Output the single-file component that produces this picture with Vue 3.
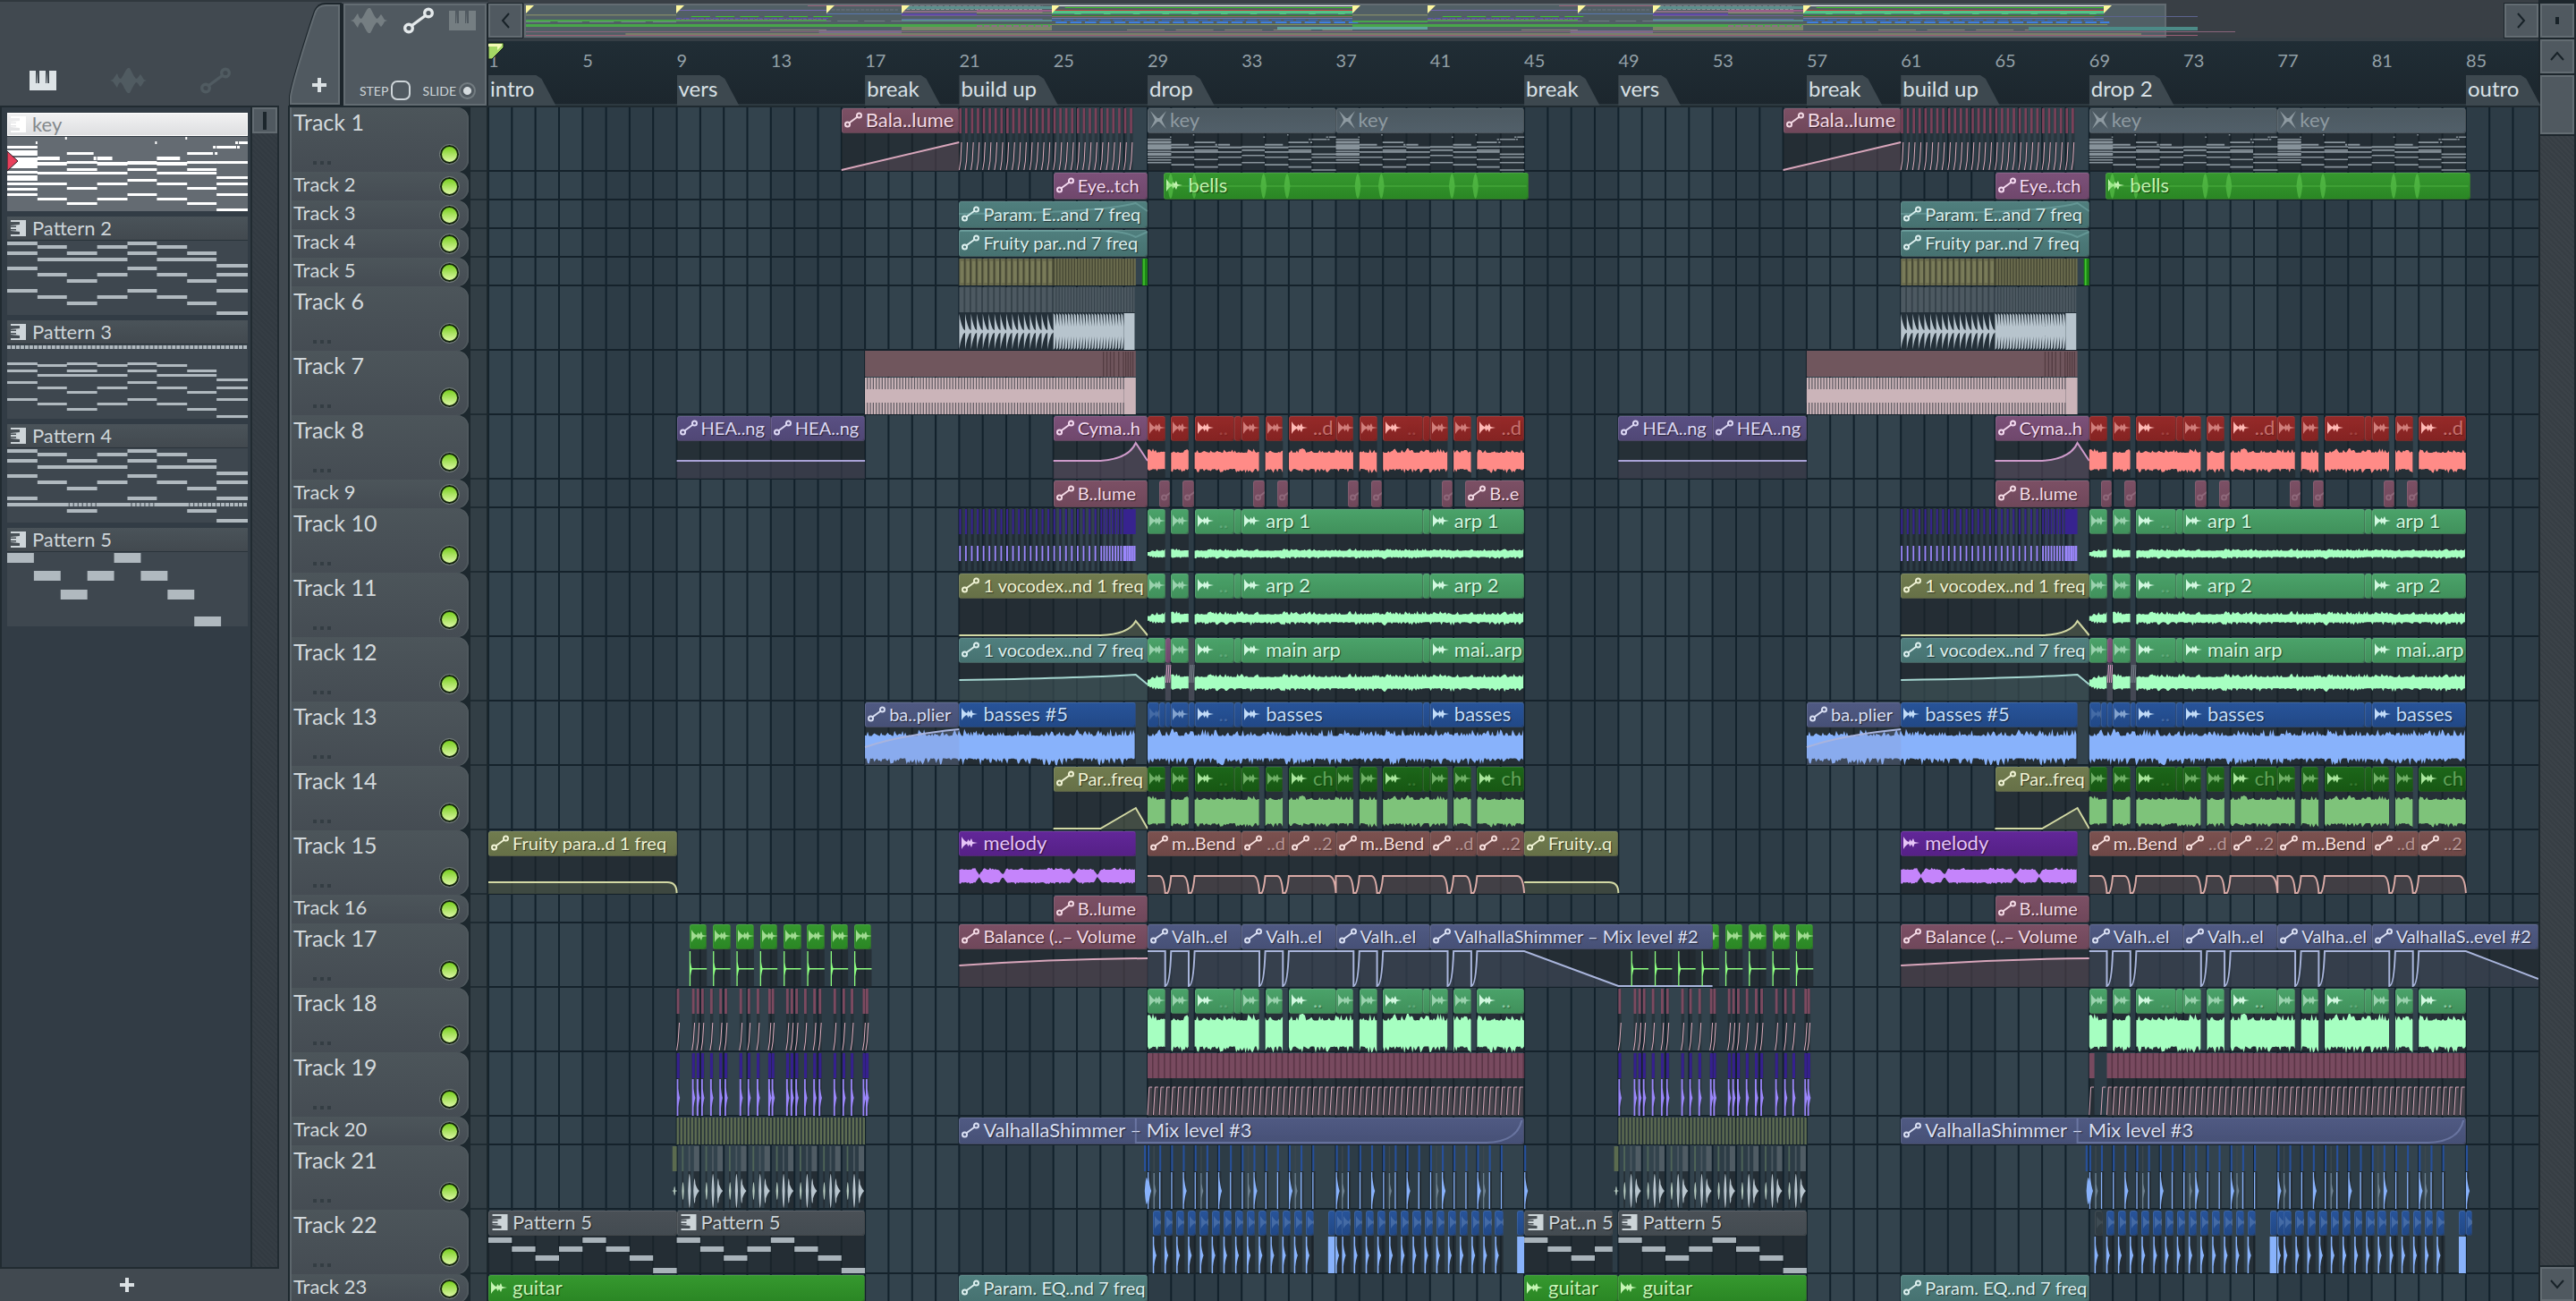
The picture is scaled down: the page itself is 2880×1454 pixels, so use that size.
<script setup>
const TOTAL = 87.08
const BAR = 26.32
const W = Math.round(TOTAL * BAR)
const X = (b) => Math.round((b - 1) * BAR * 10) / 10
const pct = (b) => ((b - 1) / TOTAL) * 100 + '%'
const span = (n) => (n / TOTAL) * 100 + '%'

/* ---------- drawing helpers: every helper returns path data ---------- */
const box = (a, b, y, h) => `M${X(a)} ${y}H${X(b)}V${y + h}H${X(a)}z`
const ticks = (starts, w, y, h) => starts.map((s) => box(s, s + w, y, h)).join('')
const range = (a, b, step) => {
  const out = []
  for (let i = 0; a + i * step < b - 0.001; i++) out.push(a + i * step)
  return out
}
function wave(a, b, c, amp, jitter, seed = 1, env = () => 1) {
  let s = seed * 7919
  const rnd = () => {
    s = (s * 1103515245 + 12345) % 2147483648
    return s / 2147483648
  }
  const up = []
  const down = []
  for (let x = X(a); x <= X(b); x += 1.5) {
    const e = env(x / BAR + 1)
    const r1 = rnd()
    const r2 = rnd()
    up.push(`${x.toFixed(1)} ${(c - e * (amp + (r1 * r1 * r1 * 1.6 - 0.3) * jitter)).toFixed(1)}`)
    down.unshift(`${x.toFixed(1)} ${(c + e * (amp + (r2 * r2 * r2 * 1.6 - 0.3) * jitter)).toFixed(1)}`)
  }
  return `M${up.join('L')}L${down.join('L')}z`
}
const decay = (a, w, c, amp) =>
  `M${X(a)} ${c - amp}Q${X(a + w * 0.35)} ${c - amp * 0.3} ${X(a + w)} ${c}Q${X(a + w * 0.35)} ${c + amp * 0.3} ${X(a)} ${c + amp}z`
const lens = (a, w, c, amp) =>
  `M${X(a)} ${c}Q${X(a + w / 2)} ${c - amp * 2} ${X(a + w)} ${c}Q${X(a + w / 2)} ${c + amp * 2} ${X(a)} ${c}z`

const DARK = 'rgba(31,37,42,.62)'
const fill = (d, f) => ({ d, f, s: 'none' })
const line = (d, s, w = 2) => ({ d, f: 'none', s, w })
const shade = (...pairs) => fill(pairs.map(([a, b]) => box(a, b, 29, 42)).join(''), DARK)
function curve(d, a, b, color, tint) {
  return [shade([a, b]), fill(`${d}L${X(b)} 71L${X(a)} 71z`, tint), line(d, color)]
}
const both = (fn) => [...fn(0), ...fn(40)]

/* ---------- shared segment layouts ---------- */
const chopped = [
  [29, 29.75], [30, 30.75], [31, 32.7], [32.7, 33], [33, 33.75], [34, 34.75], [35, 37],
  [37, 37.75], [38, 38.75], [39, 40.7], [40.7, 41], [41, 41.75], [42, 42.75], [43, 45],
]
const choppedBodies = [
  [29, 29.75], [30, 30.75], [31, 33.75], [34, 34.75], [35, 37.75], [38, 38.75], [39, 41.75], [42, 42.75], [43, 45],
]
const gaps = [29.75, 30.75, 33.75, 34.75, 37.75, 38.75, 41.75, 42.75]
const clip = (a, b, k, i, t = '', o = {}) => ({
  a, b, k, i, t,
  tight: i === 'auto' && t.length * 10 > (b - a) * BAR - 36,
  ...o,
})
const chopClips = (k, t, dots) => (o) =>
  chopped.map(([a, b]) => {
    const len = b - a
    if (len < 0.5) return clip(a + o, b + o, k, '')
    if (len < 1) return clip(a + o, b + o, k, 'audio', '', { dim: true })
    if (len < 1.9) return clip(a + o, b + o, k, 'audio', '..', { ghost: true })
    return clip(a + o, b + o, k, 'audio', t, { faint: true, end: !dots })
  })
const chopWave = (amp, jit, color) => (o) => [
  shade(...choppedBodies.map(([a, b]) => [a + o, b + o])),
  ...choppedBodies.map(([a, b], i) => fill(wave(a + o, b + o, 51, amp, jit, i + 3), color)),
]
const longClips = (k, t1, t2) => (o) => [
  clip(29 + o, 29.75 + o, k, 'audio', '', { dim: true }),
  clip(30 + o, 30.75 + o, k, 'audio', '', { dim: true }),
  clip(31 + o, 32.7 + o, k, 'audio', '..', { ghost: true }),
  clip(32.7 + o, 33 + o, k, ''),
  clip(33 + o, 40.7 + o, k, 'audio', t1),
  clip(40.7 + o, 41 + o, k, ''),
  clip(41 + o, 45 + o, k, 'audio', t2),
]
const longWave = (amp, jit) => (o) => [
  shade([29 + o, 29.75 + o], [30 + o, 30.75 + o], [31 + o, 45 + o]),
  ...[[29, 29.75], [30, 30.75], [31, 45]].map(([a, b], i) =>
    fill(wave(a + o, b + o, 51, amp, jit, i + 2, (x) => (x < 29.5 + o ? 0.5 + (x - 29 - o) : 1)), '#a6ffc1')),
]
const hits = [0, 0.65, 0.85, 1.04, 1.42, 1.81, 2.03, 2.67, 3.01, 3.4, 3.89, 4.03, 4.65, 4.84, 5.04, 5.41, 5.8, 6.03, 6.66, 7.04, 7.39, 7.9, 8.03]

/* ---------- piano-roll thumbnails: [x, y, width, height] ---------- */
const cols = [0, 34, 67, 101, 135, 168, 202, 235, 270]
const fromCols = (list, h = 4) =>
  list.flatMap((ys, c) => ys.map((y) => [cols[c], y - 2, cols[c + 1] - cols[c], h]))
const p2 = [[3, 14, 31, 56], [7, 21, 38, 63], [14, 21, 45, 70], [7, 21, 38, 63], [3, 14, 31, 56], [7, 21, 38, 63], [14, 21, 45, 70], [28, 38, 56, 81]]
const p3 = [[22, 30, 43, 62], [24, 35, 49, 67], [22, 30, 35, 54, 73], [24, 35, 49, 67], [22, 30, 43, 62], [24, 35, 49, 67], [30, 35, 54, 73], [40, 49, 62, 81]]
const p4 = [[3, 14, 31, 56], [7, 21, 38], [14, 21, 45, 70], [7, 21, 38], [3, 14, 31, 56], [7, 21, 38], [14, 21, 45, 70], [28, 38, 56, 81]]
const key = [
  ...fromCols([
    [12, 17, 20, 25, 28, 31, 34, 40, 45, 48, 53, 59, 65], [30, 41, 53, 70], [29, 37, 41, 58, 75], [30, 41, 53, 70],
    [29, 37, 49, 65], [30, 41, 53, 70], [29, 37, 41, 58, 75], [29, 46, 53, 65, 82],
  ], 3),
  [34, 28, 33, 4], [101, 28, 34, 4], [168, 28, 34, 4], [135, 27, 33, 4],
  [34, 22, 25, 4], [67, 17, 30, 3], [101, 22, 17, 4], [168, 22, 26, 4], [202, 17, 29, 3],
  [235, 10, 22, 3], [260, 5, 10, 3], [65, 0, 2, 3], [32, 5, 2, 3], [166, 5, 2, 3], [200, 0, 2, 3],
  [97, 22, 3, 4], [231, 10, 3, 3], [233, 17, 3, 3], [256, 5, 3, 3], [258, 10, 3, 3],
]
const beads = (y) => Array.from({ length: 54 }, (_, i) => [i * 5, y, 4, 4])
const patterns = [
  { name: 'key', on: true, notes: key },
  { name: 'Pattern 2', notes: fromCols(p2) },
  { name: 'Pattern 3', notes: [...beads(1), ...fromCols(p3, 3)] },
  { name: 'Pattern 4', notes: [...fromCols(p4), [0, 61, 67, 4], [101, 61, 34, 4], [168, 61, 34, 4], ...beads(61)] },
  { name: 'Pattern 5', notes: [6, 26, 47, 26, 6, 26, 47, 77].map((y, i) => [i * 30, y - 5, 30, 11]) },
]
const notePath = (notes) => notes.map(([x, y, w, h]) => `M${x} ${y}h${w}v${h}h-${w}z`).join('')
const keyBody = (a) =>
  key.map(([x, y, w, h]) => {
    const x0 = X(a) + (x / 270) * 8 * BAR
    return `M${x0.toFixed(1)} ${(30 + y * 0.49).toFixed(1)}h${((w / 270) * 8 * BAR).toFixed(1)}v${Math.max(1.6, h * 0.5)}h-${((w / 270) * 8 * BAR).toFixed(1)}z`
  }).join('')
const stairs = (a, n = 8) =>
  [31, 41, 51, 41, 31, 41, 51, 65].slice(0, n).map((y, i) => box(a + i, Math.min(a + i + 1, n < 8 ? a + 3.75 : 99), y, 6)).join('')

/* ---------- tracks ---------- */
const T = 72
const S = 32
const bendPath = (o) => {
  let d = `M${X(29 + o)} 51`
  for (const g of gaps) {
    d += `L${X(g + o - 0.25)} 51Q${X(g + o - 0.05)} 51 ${X(g + o)} 70L${X(g + o + 0.1)} 70Q${X(g + o + 0.2)} 66 ${X(g + o + 0.25)} 51`
    if (g === 34.75) d += `L${X(36.7 + o)} 51Q${X(36.95 + o)} 51 ${X(37 + o)} 70L${X(37 + o)} 51`
  }
  return d + `L${X(44.7 + o)} 51Q${X(44.95 + o)} 51 ${X(45 + o)} 70`
}
const valhPath = (o) =>
  `M${X(29 + o)} 31` + gaps.map((g) => `L${X(g + o)} 31L${X(g + o)} 70Q${X(g + o + 0.2)} 70 ${X(g + o + 0.25)} 31`).join('') + `L${X(45 + o)} 31`
const kicks = (o) => Array.from({ length: 8 }, (_, i) => 9.54 + o + i)
const ticks21 = range(0, 16.2, 0.5).filter((v) => v !== 7.5 && v !== 15.5)
const ghosts21 = range(0.25, 15, 2)
const pads22 = [...range(0.22, 7, 0.5), 7.98, ...range(8.3, 15, 0.5).map((v) => v - 0.04)]

const tracks = [
  {
    h: T,
    clips: both((o) => [
      clip(16 + o, 21 + o, 'mauve', 'auto', 'Bala..lume', { tight: false }),
      clip(29 + o, 37 + o, 'muted', 'mute', 'key'),
      clip(37 + o, 45 + o, 'muted', 'mute', 'key'),
    ]),
    art: both((o) => [
      ...curve(`M${X(16 + o)} 70L${X(21 + o)} 39`, 16 + o, 21 + o, '#d8a6bb', 'rgba(128,92,108,.32)'),
      fill(ticks(range(21 + o, 28.4 + o, 0.25), 0.13, 1, 69), 'rgba(31,37,42,.45)'),
      fill(ticks(range(21 + o, 28.4 + o, 0.25), 0.1, 1, 28), '#7c4159'),
      line(range(21 + o, 28.4 + o, 0.25).map((x) => `M${X(x)} 70L${X(x + 0.06)} 60L${X(x + 0.1)} 39`).join(''), '#dfaebf', 1),
      shade([29 + o, 45 + o]),
      fill(keyBody(29 + o) + keyBody(37 + o), '#87929a'),
    ]),
  },
  {
    h: S,
    clips: both((o) => [clip(25 + o, 29 + o, 'plum', 'auto', 'Eye..tch'), clip(29.7 + o, 45.2 + o, 'green', 'audio', 'bells')]),
    over: both((o) => [
      fill([29.85, 30.85, 33.8, 34.8, 37.8, 38.8, 41.8, 42.8].map((x) => lens(x + o, 0.26, 16, 14)).join('') + box(29.8 + o, 45.1 + o, 15.5, 1), 'rgba(110,220,90,.45)'),
    ]),
  },
  {
    h: S,
    clips: both((o) => [clip(21 + o, 29 + o, 'teal', 'auto', 'Param. E..and 7 freq')]),
    over: both((o) => [line(`M${X(21 + o)} 15Q${X(27 + o)} 14 ${X(28.5 + o)} 3L${X(29 + o)} 12`, 'rgba(150,210,205,.3)')]),
  },
  {
    h: S,
    clips: both((o) => [clip(21 + o, 29 + o, 'teal', 'auto', 'Fruity par..nd 7 freq')]),
    over: both((o) => [line(`M${X(21 + o)} 2L${X(27 + o)} 2Q${X(28 + o)} 2 ${X(28.5 + o)} 9L${X(29 + o)} 3`, 'rgba(150,210,205,.3)')]),
  },
  {
    h: S,
    art: both((o) => [
      fill(box(21 + o, 28.5 + o, 1, 30), '#6b6c4e'),
      fill(ticks(range(21.06 + o, 25 + o, 0.25), 0.14, 4, 24), 'rgba(150,152,112,.35)'),
      fill(ticks(range(21.2 + o, 25 + o, 0.25), 0.07, 1, 30) + ticks(range(25 + o, 28.5 + o, 0.125), 0.05, 1, 30), '#454734'),
      fill(box(28.77 + o, 29 + o, 1, 30), '#1e8417'),
      fill(box(28.82 + o, 28.88 + o, 1, 30), '#3fc22e'),
    ]),
  },
  {
    h: T,
    art: both((o) => [
      fill(box(21 + o, 28.45 + o, 1, 28), '#4d5961'),
      fill(ticks(range(21.19 + o, 25 + o, 0.25), 0.07, 1, 28) + ticks(range(25.1 + o, 28.45 + o, 0.125), 0.04, 1, 28), '#36424a'),
      fill(box(21 + o, 28.45 + o, 29, 42), '#243039'),
      fill(range(21 + o, 25 + o, 0.25).map((x) => decay(x, 0.24, 50.5, 20) + decay(x, 0.3, 50.5, 12)).join(''), '#b7c4cd'),
      fill(range(25 + o, 28 + o, 0.125).map((x) => `M${X(x)} 30L${X(x + 0.07)} 32L${X(x + 0.125)} 45V56L${X(x + 0.07)} 69L${X(x)} 71z`).join(''), '#b7c4cd'),
      fill(box(28 + o, 28.45 + o, 30, 41), '#b7c4cd'),
    ]),
  },
  {
    h: T,
    art: both((o) => [
      fill(box(17 + o, 28.5 + o, 0, 29), '#70565d'),
      fill(ticks([27.1, 27.25, 27.4, 27.55, 27.75, 27.95, 28.05, 28.15, 28.25, 28.35].map((v) => v + o), 0.05, 1, 28), '#533c42'),
      fill(box(17 + o, 28 + o, 30, 41), '#5d5960'),
      fill(ticks(range(17 + o, 28 + o, 0.125), 0.08, 30, 41), '#cbb4b9'),
      fill(box(17 + o, 28 + o, 43, 15), '#cbb4b9'),
      fill(box(28 + o, 28.5 + o, 30, 41), '#cbb4b9'),
    ]),
  },
  {
    h: T,
    clips: both((o) => [
      clip(9 + o, 13 + o, 'dusk', 'auto', 'HEA..ng'),
      clip(13 + o, 17 + o, 'dusk', 'auto', 'HEA..ng'),
      clip(25 + o, 29 + o, 'plum', 'auto', 'Cyma..h'),
      ...chopClips('red', '..d')(o),
    ]),
    art: both((o) => [
      ...curve(`M${X(9 + o)} 51H${X(17 + o)}`, 9 + o, 17 + o, '#aaa3d8', 'rgba(100,92,118,.3)'),
      ...curve(`M${X(25 + o)} 51H${X(27 + o)}Q${X(28.2 + o)} 49 ${X(28.5 + o)} 31L${X(29 + o)} 51`, 25 + o, 29 + o, '#cf9bcb', 'rgba(128,100,128,.35)'),
      ...chopWave(10, 3, '#ff8b87')(o),
    ]),
  },
  {
    h: S,
    clips: [
      ...both((o) => [
        clip(25 + o, 29 + o, 'mauve', 'auto', 'B..lume'),
        ...[29.5, 30.5, 33.5, 34.5, 37.5, 38.5, 41.5].map((x) => clip(x + o, x + o + 0.47, 'mauve', 'auto', '', { ghost: true })),
      ]),
      clip(42.5, 45, 'mauve', 'auto', 'B..e'),
      clip(82.5, 82.97, 'mauve', 'auto', '', { ghost: true }),
    ],
  },
  {
    h: T,
    clips: both(longClips('emerald', 'arp 1', 'arp 1')),
    art: both((o) => [
      fill(ticks(range(21 + o, 28.4 + o, 0.25), 0.12, 0, 71), 'rgba(27,34,42,.6)'),
      fill(ticks(range(21 + o, 27 + o, 0.25), 0.08, 1, 28) + ticks(range(27 + o, 28 + o, 0.12), 0.07, 1, 28) + box(28 + o, 28.5 + o, 1, 28), '#37238f'),
      fill(ticks(range(21 + o, 27 + o, 0.25), 0.07, 42, 17) + ticks(range(27 + o, 28 + o, 0.12), 0.07, 42, 17) + ticks(range(28 + o, 28.5 + o, 0.1), 0.09, 42, 17), '#9a86fa'),
      ...longWave(4, 1.5)(o),
    ]),
  },
  {
    h: T,
    clips: both((o) => [clip(21 + o, 29 + o, 'olive', 'auto', '1 vocodex..nd 1 freq'), ...longClips('emerald', 'arp 2', 'arp 2')(o)]),
    art: both((o) => [
      ...curve(`M${X(21 + o)} 70H${X(27 + o)}Q${X(28.2 + o)} 69 ${X(28.5 + o)} 54L${X(29 + o)} 70`, 21 + o, 29 + o, '#d3d9a4', 'rgba(120,130,95,.35)'),
      ...longWave(5, 2.5)(o),
    ]),
  },
  {
    h: T,
    clips: both((o) => [
      clip(21 + o, 29 + o, 'teal', 'auto', '1 vocodex..nd 7 freq'),
      clip(29.75 + o, 30 + o, 'plum', ''),
      ...longClips('emerald', 'main arp', 'mai..arp')(o),
    ]),
    art: both((o) => [
      ...curve(`M${X(21 + o)} 48Q${X(26 + o)} 46 ${X(28.5 + o)} 42L${X(29 + o)} 53`, 21 + o, 29 + o, '#a5d6d0', 'rgba(90,120,122,.35)'),
      fill(box(29.75 + o, 30 + o, 29, 42) + box(30.75 + o, 31 + o, 1, 70), '#444854'),
      line([29.78, 29.86, 29.94].map((x) => `M${X(x + o)} 51L${X(x + 0.05 + o)} 31`).join(''), '#d79cc2', 1),
      line([30.78, 30.86, 30.94].map((x) => `M${X(x + o)} 51L${X(x + 0.05 + o)} 31`).join(''), '#7d8790', 1),
      ...longWave(7, 2.5)(o),
    ]),
  },
  {
    h: T,
    clips: both((o) => [
      clip(17 + o, 21 + o, 'slate', 'auto', 'ba..plier'),
      clip(21 + o, 28.5 + o, 'blue', 'audio', 'basses #5'),
      clip(29 + o, 29.5 + o, 'blue', 'audio', '', { ghost: true }),
      clip(29.5 + o, 29.75 + o, 'blue', ''),
      clip(29.75 + o, 30 + o, 'blue', ''),
      clip(30.75 + o, 31 + o, 'blue', ''),
      ...longClips('blue', 'basses', 'basses')(o).slice(1),
    ]),
    art: both((o) => [
      shade([17 + o, 28.5 + o], [29 + o, 45 + o]),
      fill(wave(17 + o, 28.5 + o, 51, 14, 5, 5) + wave(29 + o, 45 + o, 51, 14, 5, 9), '#88b2fb'),
      fill(`M${X(17 + o)} 51Q${X(18.6 + o)} 37 ${X(21 + o)} 31V71H${X(17 + o)}z`, 'rgba(140,150,200,.25)'),
      line(`M${X(17 + o)} 51Q${X(18.6 + o)} 37 ${X(21 + o)} 31`, '#a9b4dd'),
    ]),
  },
  {
    h: T,
    clips: both((o) => [clip(25 + o, 29 + o, 'olive', 'auto', 'Par..freq'), ...chopClips('forest', 'ch')(o)]),
    art: both((o) => [
      ...curve(`M${X(25 + o)} 70H${X(27 + o)}L${X(28.5 + o)} 47L${X(29 + o)} 70`, 25 + o, 29 + o, '#d3d9a4', 'rgba(120,130,95,.35)'),
      ...chopWave(14, 3, '#7ec37a')(o),
    ]),
  },
  {
    h: T,
    clips: [
      clip(1, 9, 'olive', 'auto', 'Fruity para..d 1 freq'),
      clip(45, 49, 'olive', 'auto', 'Fruity..q'),
      ...both((o) => [
        clip(21 + o, 28.5 + o, 'violet', 'audio', 'melody'),
        ...[0, 8].flatMap((p) => [
          clip(29 + p + o, 33 + p + o, 'brown', 'auto', 'm..Bend'),
          clip(33 + p + o, 35 + p + o, 'brown', 'auto', '..d', { faint: true, end: true }),
          clip(35 + p + o, 37 + p + o, 'brown', 'auto', '..2', { faint: true, end: true }),
        ]),
      ]),
    ],
    art: [
      ...curve(`M${X(1)} 58H${X(8.6)}Q${X(9)} 58 ${X(9)} 70`, 1, 9, '#d3d9a4', 'rgba(110,120,90,.35)'),
      ...curve(`M${X(45)} 58H${X(48.6)}Q${X(49)} 58 ${X(49)} 70`, 45, 49, '#d3d9a4', 'rgba(110,120,90,.35)'),
      ...both((o) => [
        shade([21 + o, 28.5 + o]),
        fill(wave(21 + o, 28.5 + o, 51, 7.5, 1.5, 4, (x) => Math.min(1, ...[21.85, 22.85, 25.87, 26.87].map((p) => 0.15 + Math.abs(x - o - p) * 5))), '#c584fb'),
        ...curve(bendPath(o), 29 + o, 45 + o, '#d9aaa6', 'rgba(128,100,102,.32)'),
      ]),
    ],
  },
  { h: S, clips: both((o) => [clip(25 + o, 29 + o, 'mauve', 'auto', 'B..lume')]) },
  {
    h: T,
    clips: [
      ...both((o) => kicks(o).map((x) => clip(x, x + 0.74, 'green', 'audio', '', { mid: true }))),
      ...both((o) => [clip(21 + o, 29 + o, 'mauve', 'auto', 'Balance (..– Volume')]),
      clip(29, 33, 'slate', 'auto', 'Valh..el'), clip(33, 37, 'slate', 'auto', 'Valh..el'), clip(37, 41, 'slate', 'auto', 'Valh..el'),
      clip(41, 53, 'slate', 'auto', 'ValhallaShimmer – Mix level #2'),
      clip(69, 73, 'slate', 'auto', 'Valh..el'), clip(73, 77, 'slate', 'auto', 'Valh..el'), clip(77, 81, 'slate', 'auto', 'Valha..el'),
      clip(81, 88.08, 'slate', 'auto', 'ValhallaS..evel #2'),
    ],
    art: [
      ...both((o) => [
        shade(...kicks(o).map((x) => [x, x + 0.74])),
        ...curve(`M${X(21 + o)} 47Q${X(25 + o)} 40 ${X(29 + o)} 39`, 21 + o, 29 + o, '#d8a6bb', 'rgba(128,92,108,.32)'),
      ]),
      ...curve(valhPath(0) + `L${X(49)} 70H${X(53)}`, 29, 53, '#a9b5dc', 'rgba(92,102,130,.3)'),
      ...curve(valhPath(40) + `L${X(88.08)} 62`, 69, 88.08, '#a9b5dc', 'rgba(92,102,130,.3)'),
      ...both((o) => [
        fill(kicks(o).map((x) => box(x, x + 0.05, 31, 39) + decay(x + 0.04, 0.08, 51, 10) + box(x, x + 0.74, 50, 1.4)).join(''), '#8dff80'),
      ]),
    ],
  },
  {
    h: T,
    clips: both(chopClips('emerald', '..', true)),
    art: both((o) => [
      fill(ticks(hits.map((x) => 9 + o + x), 0.13, 1, 70), 'rgba(31,37,42,.5)'),
      fill(ticks(hits.map((x) => 9 + o + x), 0.11, 1, 28), '#7c4a60'),
      line(hits.map((x) => `M${X(9 + o + x)} 70L${X(9.06 + o + x)} 60L${X(9.11 + o + x)} 39`).join(''), '#dfaebf', 1),
      ...chopWave(16, 5, '#a6ffc1')(o),
    ]),
  },
  {
    h: T,
    art: both((o) => {
      const s = o ? 69.75 : 29
      const saw = range(s, 45 + o, 0.25)
      return [
        fill(ticks(hits.map((x) => 9 + o + x), 0.13, 1, 70), 'rgba(31,37,42,.5)'),
        fill(ticks(hits.map((x) => 9 + o + x), 0.12, 1, 28), '#35208e'),
        fill(hits.map((x) => box(9 + o + x, 9.07 + o + x, 30, 41) + decay(9.06 + o + x, 0.08, 51, 14)).join(''), '#9a86fa'),
        fill(box(s, 45 + o, 1, 28) + (o ? box(69, 69.22, 1, 28) : ''), '#784a5f'),
        fill(ticks(saw.map((x) => x + 0.19), 0.06, 1, 28), '#5a3546'),
        shade([s, 45 + o], [29 + o, 29.22 + o]),
        fill(saw.map((x) => `M${X(x)} 71L${X(x + 0.07)} 39H${X(x + 0.2)}V71z`).join(''), 'rgba(128,100,112,.35)'),
        line([...(o ? [69, 69.5] : []), ...saw].map((x) => `M${X(x)} 70L${X(x + 0.07)} 39H${X(x + 0.2)}`).join(''), '#d9a8ba', 1),
      ]
    }),
  },
  {
    h: S,
    clips: both((o) => [clip(21 + o, 45 + o, 'slate', 'auto', 'ValhallaShimmer – Mix level #3')]),
    art: both((o) => [
      fill(box(9 + o, 17 + o, 1, 30), 'rgba(31,40,42,.5)'),
      fill(ticks(range(9 + o, 16.95 + o, 0.152), 0.09, 1, 30), '#5e6d52'),
    ]),
    over: both((o) => [line(`M${X(28.5 + o)} 2V29H${X(43.4 + o)}Q${X(44.7 + o)} 28 ${X(44.9 + o)} 4`, 'rgba(150,165,215,.4)')]),
  },
  {
    h: T,
    art: both((o) => [
      fill(box(8.82 + o, 9 + o, 1, 28), '#5b6b4f'),
      fill(range(8.82 + o, 16.5 + o, 1).map((x) => box(x + 0.4, x + 0.47, 29, 42) + box(x + 0.66, x + 0.78, 29, 42) + box(x + 0.9, x + 1.15, 29, 42)).join(''), DARK),
      fill(ticks(range(9.22 + o, 17 + o, 1), 0.07, 1, 28), '#4f6558'),
      fill(ticks(range(9.5 + o, 17 + o, 1), 0.07, 1, 28), '#4b5860'),
      fill(ticks(range(9.73 + o, 17 + o, 1), 0.23, 1, 28), '#505c64'),
      fill(range(9.22 + o, 17 + o, 1).map((x) => lens(x, 0.09, 51, 10)).join('') + lens(8.87 + o, 0.08, 51, 5) + box(8.82 + o, 9 + o, 50.5, 1), '#b3c8bd'),
      fill(range(9.48 + o, 17 + o, 1).map((x) => lens(x, 0.12, 51, 19) + lens(x + 0.23, 0.1, 51, 14) + decay(x + 0.28, 0.2, 51, 11)).join(''), '#b7c4cd'),
      fill(ticks(ticks21.map((x) => 29 + o + x), 0.08, 0, 29) + box(28.85 + o, 28.93 + o, 0, 29), '#27509b'),
      fill(ticks(ghosts21.map((x) => 29 + o + x), 0.05, 1, 28), '#3c4850'),
      fill(ticks(ticks21.map((x) => 29 + o + x), 0.13, 29, 42), DARK),
      fill(ghosts21.map((x) => decay(29 + o + x, 0.12, 51, 20) + box(29 + o + x, 29.05 + o + x, 31, 40)).join(''), '#6c7f8e'),
      fill(ticks21.map((x, i) => box(29 + o + x, 29.05 + o + x, 30, 41) + (i % 3 ? '' : decay(29.04 + o + x, 0.12, 51, 18))).join('') + lens(28.88 + o, 0.16, 51, 15), '#88b2fb'),
    ]),
  },
  {
    h: T,
    clips: [
      clip(1, 9, 'pattern', 'pat', 'Pattern 5'), clip(9, 17, 'pattern', 'pat', 'Pattern 5'),
      ...both((o) => [
        ...pads22.map((x) => clip(29 + o + x, 29.35 + o + x, o && x < 0.3 ? 'ghost' : 'blue', 'audio', '', { ghost: true })),
        clip(36.67 + o, 36.98 + o, 'blue', ''),
        clip(44.7 + o, 45 + o, 'blue', ''),
      ]),
      clip(85, 85.27, 'blue', 'audio', '', { ghost: true }),
      clip(45, 48.75, 'pattern', 'pat', 'Pat..n 5'), clip(49, 57, 'pattern', 'pat', 'Pattern 5'),
    ],
    art: [
      shade([1, 17], [45, 48.75], [49, 57]),
      fill(stairs(1) + stairs(9) + stairs(45, 4) + stairs(49), '#a9b3ba'),
      ...both((o) => [
        shade(...pads22.map((x) => [29 + o + x, 29.35 + o + x])),
        fill(pads22.map((x) => box(29 + o + x, 29.06 + o + x, 30, 41) + decay(29.05 + o + x, 0.11, 51, 14)).join('') + box(36.67 + o, 36.95 + o, 30, 41) + box(44.7 + o, 45 + o, 30, 41), '#88b2fb'),
      ]),
    ],
  },
  {
    h: S,
    clips: [
      clip(1, 17, 'green', 'audio', 'guitar'), clip(45, 49, 'green', 'audio', 'guitar'), clip(49, 57, 'green', 'audio', 'guitar'),
      ...both((o) => [clip(21 + o, 29 + o, 'teal', 'auto', 'Param. EQ..nd 7 freq')]),
    ],
  },
]

const bars = range(1, 88, 1)
const numbers = range(1, 86, 4)
const markers = [
  [1, 'intro'], [9, 'vers'], [17, 'break'], [21, 'build up'], [29, 'drop'], [45, 'break'], [49, 'vers'],
  [57, 'break'], [61, 'build up'], [69, 'drop 2'], [85, 'outro'],
]

/* ---------- overview strip: [start, end, y, height, colour, dash] ---------- */
const sectionMap = (o) => [
  [9, 17, 5, 1, '#7468b0'], [9.8, 17.3, 12, 1, '#3fc22e', 1], [9, 17.2, 14, 1, '#5550b0', 0.3], [9, 17, 15, 1, '#7d5f8c', 0.2],
  [9, 21, 17, 1, '#6f7f83', 1.1], [9, 17, 16, 2, '#4e9c54'], [9, 29, 21, 3, '#48a64a'],
  [14, 17, 27, 1, '#8c8576'], [17, 21, 9, 1, '#5878b0'], [17, 20.8, 4, 2, '#5f6973', 0.2], [16.6, 21, 28, 3, '#746f93'],
  [16, 21, 0, 1, '#96627a'], [21, 29, 1, 3, '#5b8f8c'], [21, 28.5, 0, 1, '#7d8088', 0.25], [21, 28.5, 4, 1, '#8e9496', 0.2],
  [21, 28.5, 6, 2, '#8c6f85'], [25, 29, 5, 2, '#9a5f8a'], [21, 25, 9, 3, '#5e49a6'], [21, 29, 11, 1, '#6f5f90'], [25, 29, 8, 1, '#87916a'],
  [21, 28.5, 15, 1, '#5d6aa8'], [21, 29, 16, 2, '#5b8f8c'], [21, 29, 24, 4, '#7c8468'], [25, 29, 22, 2, '#8c6f85', 0.3],
  [29, 45, 0, 1, '#f2f5f5'], [29.7, 45.2, 2, 1, '#3fc22e'], [29, 45, 5, 1, '#c03c3c'], [29, 45, 6, 4, '#53c486'], [29, 45, 9, 1, '#4b8a73', 1.2],
  [29, 45, 11, 1, '#2f8a2a'], [29, 45, 12, 1, '#8f6464'], [29, 45, 14, 1, '#6b7bb8'], [29, 45, 16, 1, '#2e69d0', 0.5], [29.2, 45.3, 18, 2, '#3f7fe0', 0.6],
  [29, 45.2, 21, 1, '#7f8f55'], [33, 45, 27, 1, '#8c8576', 2],
].map(([a, b, y, h, c, d]) => [a + o, b + o, y, h, c, d])
const overview = [
  [1, 9, 10, 1.6, '#7c8468'], [1, 9, 16, 2, '#48a64a'], [1, 9, 18, 1, '#6f8f85', 1.3], [1, 9, 21, 3, '#48a64a'],
  ...sectionMap(0), [45, 49, 17, 2, '#48a64a'], [45, 49, 10, 1.6, '#7c8468'], [45, 49, 21, 3, '#48a64a'], [41, 49, 24, 3, '#60a39e'],
  ...sectionMap(40), [81, 90, 24, 4, '#4c8a87'],
  [84.5, 90, 12, 1, '#5c6490'], [6.3, 87, 31, 2, '#778069'], [1, 92, 29, 1, '#8a647b'], [1, 90, 33, 1, '#9a5f75'],
].map(([a, b, y, h, f, dash]) => ({
  d: (dash ? range(a, b, dash * 1.3).map((s) => [s, Math.min(b, s + dash)]) : [[a, b]])
    .map(([s, e]) => `M${(s - 1) * 21} ${y}H${(e - 1) * 21}V${y + h}H${(s - 1) * 21}z`).join(''),
  f,
}))
</script>

<template>
  <svg class="defs" aria-hidden="true">
    <symbol id="i-auto" viewBox="0 0 34 30">
      <g fill="none" stroke="currentColor" stroke-width="3.4">
        <circle cx="6" cy="23.500" r="4.300" /><circle cx="28" cy="6.500" r="4.300" /><path d="M9.500 20.500L24.500 9.500" />
      </g>
    </symbol>
    <symbol id="i-wave" viewBox="0 0 41 28">
      <path fill="currentColor" d="M0 14L3 13C5 11 6 8 8 6C9 9 10 12 12 12C15 9 17 2 20 0H22C24 3 26 9 29 12C31 12 32 9 34 7C36 9 37 12 38 13L41 14L38 15C37 17 35 20 34 21C32 19 31 16 29 16C26 19 24 25 22 28H20C17 26 15 19 12 16C10 16 9 19 8 22C6 20 5 17 3 15z" />
    </symbol>
    <symbol id="i-piano" viewBox="0 0 30 22">
      <path fill="currentColor" d="M0 0H7V14H8L9 1V14H11V0H18V14H19L20 1V14H22V0H30V22H0z" />
    </symbol>
    <symbol id="i-audio" viewBox="0 0 18 16">
      <path fill="currentColor" d="M0 1Q3 6 6 7L7.500 4L9 6.500L11 3L12.500 7L18 8L12.500 9L11 13L9 9.500L7.500 12L6 9Q3 10 0 15z" />
    </symbol>
    <symbol id="i-pat" viewBox="0 0 17 18">
      <path fill="currentColor" d="M0 0H17V18H0V16H10V13L0 12V11.500H6V10H0V8H6V6.500H0V6L10 5V2H0z" />
    </symbol>
    <symbol id="i-mute" viewBox="0 0 18 20">
      <path fill="currentColor" d="M0 0L8 8H10L18 0Q13 9 13 10T18 20L10 12H8L0 20Q5 11 5 10T0 0z" />
    </symbol>
  </svg>

  <div class="app">
    <aside class="picker">
      <nav class="kinds">
        <button aria-label="Patterns" class="kind on"><svg width="30" height="22"><use href="#i-piano" /></svg></button>
        <button aria-label="Audio clips" class="kind"><svg width="41" height="28"><use href="#i-wave" /></svg></button>
        <button aria-label="Automation clips" class="kind"><svg width="34" height="30"><use href="#i-auto" /></svg></button>
      </nav>
      <div class="shelf">
        <ul class="patterns">
          <li v-for="p in patterns" :key="p.name">
            <button class="pattern-card" :class="{ on: p.on }">
              <span class="pattern-name"><svg width="17" height="18"><use href="#i-pat" /></svg>{{ p.name }}</span>
              <svg class="thumb" viewBox="0 0 270 83" preserveAspectRatio="none">
                <path class="notes" :d="notePath(p.notes)" />
                <path v-if="p.on" class="cue" d="M0 16L12 27L0 38z" />
              </svg>
            </button>
          </li>
        </ul>
        <div class="picker-scroll"><span class="picker-thumb"></span></div>
      </div>
      <button class="add-pattern" aria-label="Add pattern">
        <svg width="18" height="18"><path d="M7 1h4v6h6v4h-6v6H7v-6H1V7h6z" /></svg>
      </button>
    </aside>

    <main class="arranger">
      <header class="top">
        <button class="add-track" aria-label="Add track">
          <svg width="60" height="118" viewBox="0 0 60 118">
            <path class="tab-edge" d="M1 118V108C3 92 24 26 29 12Q33 3 42 3H60V118z" />
            <path class="tab-face" d="M3 116V108C5 92 26 27 31 13Q34 6 42 6H57V116z" />
            <path class="plus" d="M27 93h6v-6h4v6h6v4h-6v6h-4v-6h-6z" />
          </svg>
        </button>
        <div class="tools">
          <div class="tool-icons">
            <button aria-label="Audio view"><svg width="41" height="28"><use href="#i-wave" /></svg></button>
            <button aria-label="Automation view" class="on"><svg width="34" height="30"><use href="#i-auto" /></svg></button>
            <button aria-label="Pattern view"><svg width="30" height="22"><use href="#i-piano" /></svg></button>
          </div>
          <div class="tool-options">
            <label>STEP<input type="checkbox" class="step" /></label>
            <label>SLIDE<input type="radio" class="slide" checked /></label>
          </div>
        </div>
        <div class="timeline">
          <div class="scroller">
            <button class="arrow" aria-label="Scroll left"><svg width="12" height="20"><path d="M10 2L3 10L10 18" /></svg></button>
            <div class="overview">
              <div class="window"></div>
              <svg viewBox="0 0 2212 34" preserveAspectRatio="none">
                <path v-for="(s, i) in overview" :key="i" :d="s.d" :fill="s.f" />
                <path v-for="m in markers" :key="m[0]" class="flag" :d="`M${(m[0] - 1) * 21} 0h9l-9 9z`" />
              </svg>
            </div>
            <button class="arrow" aria-label="Scroll right"><svg width="12" height="20"><path d="M2 2L9 10L2 18" /></svg></button>
          </div>
          <div class="ruler">
            <span v-for="n in numbers" :key="n" class="bar-number" :style="{ left: pct(n) }">{{ n }}</span>
            <span v-for="m in markers" :key="m[0]" class="marker" :style="{ left: pct(m[0]) }">{{ m[1] }}</span>
            <svg class="playhead" width="20" height="20"><path d="M0 1H17V6L4 19H0z" /><path class="shine" d="M0 2H15V4L10 9V5H0z" /></svg>
          </div>
        </div>
      </header>

      <div class="tracks">
        <div class="grid">
          <svg :viewBox="`0 0 ${W} 100`" preserveAspectRatio="none">
            <template v-for="b in bars" :key="b">
              <rect v-if="(b - 1) % 8 < 4" :x="X(b)" y="0" :width="BAR + 0.3" height="100" class="bright" />
            </template>
            <rect v-for="b in bars" :key="b" :x="X(b) - 1" y="0" width="2" height="100" class="bar-line" />
          </svg>
        </div>
        <section v-for="(t, n) in tracks" :key="n" class="row" :class="{ short: t.h === S }">
          <div class="head">
            <span class="track-name">Track {{ n + 1 }}</span>
            <span v-if="t.h === T" class="dots"><i></i><i></i><i></i></span>
            <input type="checkbox" checked class="led" :aria-label="`Enable track ${n + 1}`" />
          </div>
          <div class="gutter"></div>
          <div class="lane">
            <svg v-if="t.art" class="art" :viewBox="`0 0 ${W} ${t.h}`" preserveAspectRatio="none">
              <path v-for="(p, i) in t.art" :key="i" :d="p.d" :fill="p.f" :stroke="p.s" :stroke-width="p.w" />
            </svg>
            <div
              v-for="(c, i) in t.clips" :key="i" class="clip"
              :class="[c.k, { dim: c.dim, ghosted: c.ghost, faint: c.faint, end: c.end, mid: c.mid, tight: c.tight, sliver: c.b - c.a < 1 }]"
              :style="{ left: pct(c.a), width: span(c.b - c.a) }"
            >
              <svg v-if="c.i" class="clip-icon" :class="c.i"><use :href="'#i-' + c.i" /></svg>
              <span v-if="c.t" class="clip-name">{{ c.t }}</span>
            </div>
            <svg v-if="t.over" class="art" :viewBox="`0 0 ${W} ${t.h}`" preserveAspectRatio="none">
              <path v-for="(p, i) in t.over" :key="i" :d="p.d" :fill="p.f" :stroke="p.s" :stroke-width="p.w" />
            </svg>
          </div>
        </section>
      </div>
    </main>

    <div class="side-scroll">
      <button class="cell" aria-label="Zoom"><svg width="4" height="8"><rect width="4" height="8" /></svg></button>
      <button class="cell" aria-label="Scroll up"><svg width="18" height="12"><path d="M2 10L9 2L16 10" /></svg></button>
      <div class="side-thumb"></div>
      <div class="side-track"></div>
      <button class="cell" aria-label="Scroll down"><svg width="18" height="12"><path d="M2 2L9 10L16 2" /></svg></button>
    </div>
  </div>
</template>

<style>
body {
  margin: 0;
  background: #414950;
}
</style>

<style scoped>
.defs {
  position: absolute;
  width: 0;
  height: 0;
}
.app {
  display: flex;
  height: 100vh;
  overflow: hidden;
  background: #414950;
  color: #d3d9dc;
  font-family: Lato, "Open Sans", sans-serif;
  font-size: 22px;
  box-shadow: inset 0 2px #30383e;
}
button {
  padding: 0;
  border: 0;
  background: none;
  color: inherit;
  font: inherit;
}
svg {
  display: block;
}

/* picker */
.picker {
  display: flex;
  flex: none;
  flex-direction: column;
  width: 312px;
  margin-right: 10px;
}
.kinds {
  display: flex;
  align-items: center;
  gap: 60px;
  height: 56px;
  padding: 62px 0 0 33px;
  color: #505b61;
}
.kind.on {
  color: #dde3e6;
}
.shelf {
  display: flex;
  flex: 1;
  min-height: 0;
  border: 2px solid #212b31;
  background: #323c45;
}
.patterns {
  display: flex;
  flex: 1;
  flex-direction: column;
  gap: 6px;
  margin: 0;
  padding: 6px 3px 0 6px;
  list-style: none;
}
.pattern-card {
  display: block;
  width: 100%;
  text-align: left;
}
.pattern-name {
  display: flex;
  align-items: center;
  gap: 7px;
  height: 26px;
  padding-left: 4px;
  background: linear-gradient(#4a5359, #42494f);
  box-shadow: 0 1px #2a343b;
  color: #ced5d9;
  line-height: 24px;
}
.on .pattern-name {
  background: linear-gradient(#f2f2f3, #dddee0);
  box-shadow: inset 0 0 0 1px #fff;
  color: #84898c;
}
.on .pattern-name svg {
  color: #fff;
}
.thumb {
  width: 100%;
  height: 83px;
  margin-top: 1px;
  background: #3e474f;
}
.on .thumb {
  background: #646b72;
}
.notes {
  fill: #b0b9bf;
}
.on .notes {
  fill: #fff;
}
.cue {
  fill: #e8405c;
  stroke: #241820;
  stroke-width: 1px;
}
.picker-scroll {
  width: 28px;
  border-left: 2px solid #212b31;
  background: repeating-linear-gradient(45deg, #353d44 0 2px, #323a41 2px 4px);
}
.picker-thumb {
  display: flex;
  align-items: center;
  justify-content: center;
  height: 25px;
  border: 2px solid #636c72;
  background: #505960;
}
.picker-thumb::before {
  width: 4px;
  height: 20px;
  background: #1c262c;
  content: "";
}
.add-pattern {
  display: flex;
  align-items: center;
  justify-content: center;
  height: 36px;
  padding: 12px 28px 12px 0;
  box-sizing: border-box;
}
.add-pattern svg,
.plus {
  fill: #dbe1e4;
}

/* arranger */
.arranger {
  display: flex;
  flex: 1;
  flex-direction: column;
  min-width: 0;
}
.top {
  display: flex;
  flex: none;
  height: 118px;
  border-bottom: 2px solid #1f2a30;
}
.add-track {
  width: 60px;
}
.tab-edge {
  fill: #1d262c;
}
.tab-face {
  fill: #505960;
  stroke: #636c72;
  stroke-width: 2px;
}
.tools {
  display: flex;
  flex-direction: column;
  justify-content: space-between;
  box-sizing: border-box;
  width: 164px;
  margin-top: 4px;
  padding: 4px 12px 3px 8px;
  border: solid #1d262c;
  border-width: 0 2px;
  background: #505960;
  box-shadow: inset 0 0 0 2px #636c72;
}
.tool-icons,
.tool-options {
  display: flex;
  align-items: center;
  justify-content: space-between;
  color: #757e82;
}
.tool-icons .on {
  color: #e4e9eb;
}
.tool-options {
  height: 28px;
  padding-left: 10px;
  color: #ced5d9;
  font-size: 14px;
}
.tool-options label {
  display: flex;
  align-items: center;
}
.tool-options input {
  appearance: none;
  box-sizing: border-box;
  margin: 0 0 0 3px;
}
.step {
  width: 22px;
  height: 22px;
  border: 2px solid #ced5d9;
  border-radius: 7px;
}
.slide {
  width: 19px;
  height: 19px;
  border: 2px solid #737c81;
  border-radius: 50%;
  background: radial-gradient(#d5dbde 0 4px, transparent 5px);
}
.timeline {
  display: flex;
  flex: 1;
  flex-direction: column;
  min-width: 0;
}
.scroller {
  display: flex;
  gap: 2px;
  height: 38px;
  padding-top: 4px;
  border-bottom: 4px solid #353e45;
  background: #393f45;
}
.arrow,
.cell {
  display: flex;
  flex: none;
  align-items: center;
  justify-content: center;
  box-sizing: border-box;
  width: 38px;
  height: 38px;
  border: 2px solid #636c72;
  outline: 1px solid #1d262c;
  background: #505960;
}
.arrow svg,
.cell svg {
  fill: none;
  stroke: #182228;
  stroke-width: 2px;
}
.cell rect {
  fill: #182228;
}
.overview {
  position: relative;
  flex: 1;
}
.overview svg {
  position: absolute;
  top: 2px;
  left: 2px;
  width: 100%;
  height: 34px;
}
.window {
  box-sizing: border-box;
  width: 83%;
  height: 38px;
  border: 2px solid #636c72;
  background: #515f65;
}
.flag {
  fill: #fdf7a0;
}
.ruler {
  position: relative;
  flex: 1;
  background: linear-gradient(#202d35, #1c262d);
  box-shadow: inset 0 -2px #2d3940;
}
.bar-number {
  position: absolute;
  top: 9px;
  color: #93a0a7;
  font-size: 20px;
  line-height: 24px;
}
.marker {
  position: absolute;
  bottom: 0;
  height: 34px;
  padding: 0 24px 0 2px;
  background: #3d484f;
  clip-path: polygon(0 0, calc(100% - 22px) 0, calc(100% - 16px) 4px, 100% 100%, 0 100%);
  color: #d9e1e6;
  font-size: 24px;
  line-height: 30px;
  white-space: nowrap;
}
.playhead {
  position: absolute;
  top: 1px;
  left: 0;
  fill: #a5d865;
  stroke: #10181c;
  stroke-width: 1px;
}
.playhead .shine {
  fill: #f3f9b4;
  stroke: none;
}

/* tracks */
.tracks {
  position: relative;
  display: flex;
  flex: 1;
  flex-direction: column;
  min-height: 0;
  overflow: hidden;
  background: #1d282e;
}
.grid {
  position: absolute;
  inset: 0 0 0 224px;
  background: #2d3c46;
}
.grid svg {
  width: 100%;
  height: 100%;
}
.bright {
  fill: #33434d;
}
.bar-line {
  fill: #12212b;
}
.row {
  position: relative;
  display: flex;
  flex: none;
  height: 72px;
}
.row.short {
  height: 32px;
}
.head {
  position: relative;
  box-sizing: border-box;
  width: 200px;
  margin-left: 2px;
  padding-left: 2px;
  border-left: 2px solid #5d666c;
  border-radius: 0 13px 13px 0;
  background: linear-gradient(#4c555a, #454c53);
  box-shadow: inset -2px 0 #4f585d;
}
.track-name {
  display: block;
  font-size: 25px;
  line-height: 32px;
}
.short .track-name {
  font-size: 22px;
  line-height: 28px;
}
.dots {
  position: absolute;
  top: 60px;
  left: 24px;
  display: flex;
  gap: 4px;
}
.dots i {
  width: 4px;
  height: 4px;
  background: #343d43;
}
.led {
  position: absolute;
  right: 11px;
  bottom: 9px;
  appearance: none;
  box-sizing: border-box;
  width: 21px;
  height: 21px;
  margin: 0;
  border: 2px solid #14250e;
  border-radius: 50%;
  outline: 1px solid #79827f;
  background: linear-gradient(#79cf20, #dcf7a4);
}
.short .led {
  bottom: 5px;
}
.gutter {
  box-sizing: border-box;
  width: 22px;
  border-right: 2px solid #1b262c;
  border-left: 2px solid #1d282e;
  background: #323e45;
  box-shadow: inset 0 -2px #1f2b32;
}
.lane {
  position: relative;
  flex: 1;
  min-width: 0;
  box-shadow: inset 0 -2px #15222b;
}
.art {
  position: absolute;
  inset: 0;
  width: 100%;
  height: 100%;
}
.clip {
  position: absolute;
  top: 1px;
  display: flex;
  align-items: center;
  box-sizing: border-box;
  height: 28px;
  padding: 0 0 2px 3px;
  overflow: hidden;
  border-radius: 3px;
  box-shadow: inset 0 0 0 1px rgba(255, 255, 255, 0.09), inset -1px -1px rgba(0, 0, 0, 0.28);
  color: #e2e5e8;
  text-shadow: 1px 1px 1px rgba(0, 0, 0, 0.55);
}
.short .clip {
  height: 30px;
}
.clip-icon {
  flex: none;
  width: 20px;
  height: 18px;
  margin-right: 4px;
}
.clip-icon.audio {
  width: 18px;
  height: 16px;
  margin-right: 6px;
}
.clip-icon.mute {
  width: 18px;
  height: 20px;
}
.clip-name {
  flex: 1;
  line-height: 24px;
  white-space: nowrap;
}
.tight .clip-name {
  font-size: 20px;
}
.sliver {
  padding-left: 2px;
}
.dim .clip-icon {
  opacity: 0.6;
}
.mid .clip-icon {
  opacity: 0.75;
}
.ghosted .clip-name,
.sliver.ghosted .clip-icon {
  opacity: 0.2;
}
.faint .clip-name {
  opacity: 0.5;
}
.end .clip-name {
  padding-right: 4px;
  text-align: right;
}
.mauve { background: linear-gradient(#7c5065, #6f475a); color: #f3d9e4; }
.plum { background: linear-gradient(#7c5179, #6f476c); color: #f4d9f0; }
.muted { background: linear-gradient(#4b5860, #52606a); color: #8e9aa1; text-shadow: none; }
.green { background: linear-gradient(#36992f, #2a8624); color: #c6f5b4; }
.teal { background: linear-gradient(#507f7e, #467170); color: #dcefee; }
.dusk { background: linear-gradient(#5a5083, #504775); color: #ddd8f4; }
.red { background: linear-gradient(#962a29, #842322); color: #ffb9b4; }
.emerald { background: linear-gradient(#4ba36a, #40905b); color: #d2f8e0; }
.olive { background: linear-gradient(#717c4f, #667047); color: #eff2d4; }
.slate { background: linear-gradient(#505a83, #465076); color: #d8def2; }
.blue { background: linear-gradient(#28549a, #214886); color: #c2dcf8; }
.forest { background: linear-gradient(#1d671a, #175713); color: #a9e69c; }
.violet { background: linear-gradient(#622799, #552086); color: #e6c4f7; }
.brown { background: linear-gradient(#7b5250, #6d4746); color: #f5dcda; }
.pattern { background: linear-gradient(#4a5056, #434b51); color: #ccd4d8; }
.ghost { background: #2f3b43; color: #7d8a92; }

/* right scrollbar */
.side-scroll {
  display: flex;
  flex: none;
  flex-direction: column;
  gap: 2px;
  width: 38px;
  padding: 4px 2px 0;
  background: #1d262c;
}
.side-thumb {
  box-sizing: border-box;
  height: 66px;
  border: 2px solid #636c72;
  background: #505960;
}
.side-track {
  flex: 1;
  background: repeating-linear-gradient(45deg, #3b4248 0 2px, #373e44 2px 4px);
}
</style>
